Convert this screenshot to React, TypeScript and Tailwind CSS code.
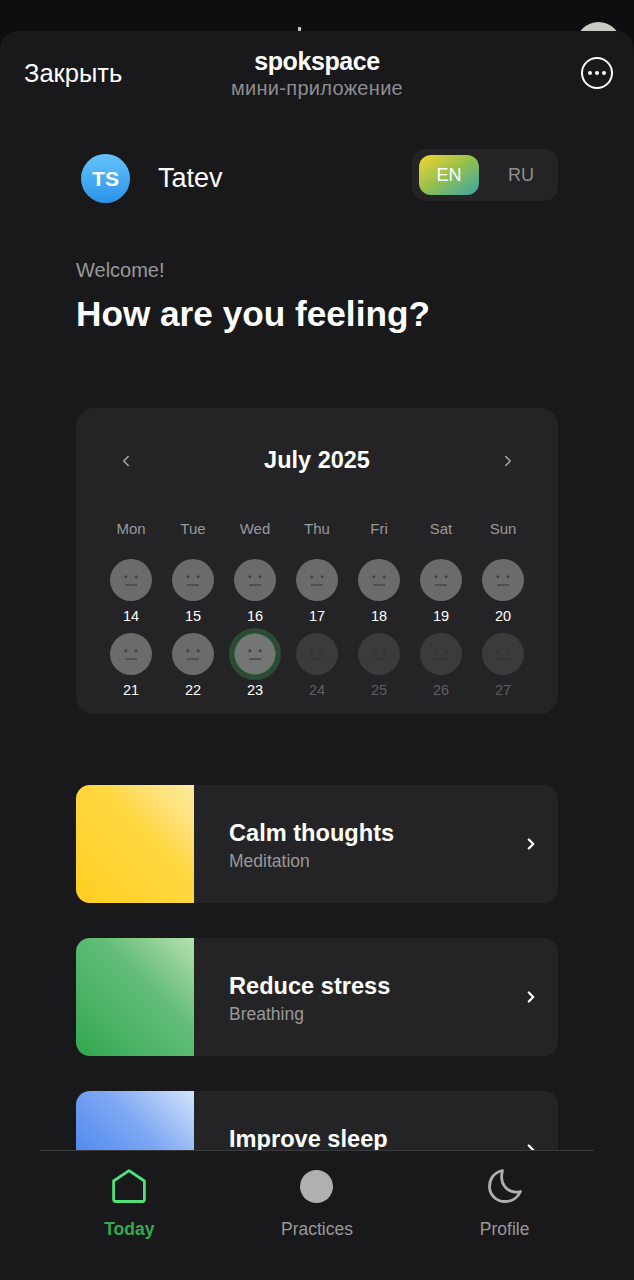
import { ChevronLeft, ChevronRight } from "lucide-react";

const week1 = [14, 15, 16, 17, 18, 19, 20];
const week2 = [21, 22, 23, 24, 25, 26, 27];
const dayNames = ["Mon", "Tue", "Wed", "Thu", "Fri", "Sat", "Sun"];

function Face({ day, muted, today }: { day: number; muted?: boolean; today?: boolean }) {
  const ink = muted ? "#323234" : "#434344";
  return (
    <div className="flex flex-col items-center">
      <div
        className={
          "w-[42px] h-[42px] rounded-full flex items-center justify-center " +
          (today
            ? "bg-[#747675] border border-[#3f7a4e] outline-[5px] outline-[#2c4a34]"
            : muted
              ? "bg-[#3b3b3d]"
              : "bg-[#6b6b6c]")
        }
      >
        <svg width="20" height="14" viewBox="0 0 20 14" fill="none">
          <circle cx="4.8" cy="3.7" r="1.5" fill={ink} />
          <circle cx="15.2" cy="3.7" r="1.5" fill={ink} />
          <line x1="4" y1="12" x2="16" y2="12" stroke={ink} strokeWidth="1.3" />
        </svg>
      </div>
      <span className={"mt-[5px] text-[14.5px] leading-[20px] " + (muted ? "text-[#5f5f61]" : "text-white")}>{day}</span>
    </div>
  );
}

function PracticeCard({ title, sub, swatch }: { title: string; sub: string; swatch: string }) {
  return (
    <div className="flex h-[118px] shrink-0 rounded-[14px] overflow-hidden bg-[#242426]">
      <div className={"w-[118px] shrink-0 " + swatch} />
      <div className="flex-1 flex flex-col justify-center pl-[35px] pt-[2px]">
        <span className="text-[23.6px] leading-[30px] font-bold text-white">{title}</span>
        <span className="text-[17.5px] leading-[24px] text-[#98989b] mt-[1px]">{sub}</span>
      </div>
      <div className="flex items-center pr-[18px]">
        <ChevronRight className="w-[18px] h-[18px] text-white" strokeWidth={3} />
      </div>
    </div>
  );
}

export default function App() {
  return (
    <div className="relative w-[634px] h-[1280px] overflow-hidden bg-[#0e0e10] flex flex-col font-['Liberation_Sans',Arial,sans-serif]">
      {/* bit of the app behind the sheet */}
      <div className="relative h-[31px] shrink-0">
        <div className="absolute left-[298px] top-[27px] w-[3px] h-[4px] bg-[#c4c4c4]" />
        <div className="absolute left-[576px] top-[22px] w-[45px] h-[45px] rounded-full bg-[#c9c9c6]" />
      </div>

      <div className="relative flex-1 min-h-0 flex flex-col bg-[#19191b] rounded-t-[18px]">
        <header className="h-[84px] shrink-0 flex items-center justify-between pl-[24px] pr-[21px]">
          <span className="text-[25.5px] text-white w-[120px]">Закрыть</span>
          <div className="flex flex-col items-center -mt-[1px]">
            <span className="text-[25px] leading-[30px] font-bold text-white tracking-[-0.4px]">spokspace</span>
            <span className="text-[20px] leading-[24px] text-[#8d8d90] tracking-[0.3px]">мини-приложение</span>
          </div>
          <div className="w-[123px] flex justify-end">
            <div className="w-[32px] h-[32px] rounded-full border-2 border-white flex items-center justify-center gap-[3px]">
              <span className="w-[4px] h-[4px] rounded-full bg-white" />
              <span className="w-[4px] h-[4px] rounded-full bg-white" />
              <span className="w-[4px] h-[4px] rounded-full bg-white" />
            </div>
          </div>
        </header>

        <main className="flex-1 min-h-0 overflow-hidden px-[76px]">
          <div className="flex items-start justify-between pt-[34px]">
            <div className="flex items-center gap-[28px] pl-[5px] mt-[5px]">
              <div className="w-[49px] h-[49px] rounded-full bg-gradient-to-b from-[#63c4fb] to-[#2a93e8] flex items-center justify-center text-white text-[21px] font-bold">
                TS
              </div>
              <span className="text-[27px] text-white">Tatev</span>
            </div>
            <div className="flex w-[146px] h-[52px] py-[6px] pl-[7px] pr-[6px] rounded-[14px] bg-[#242426]">
              <div className="w-[60px] rounded-[12px] bg-gradient-to-br from-[#f5d327] via-[#8fc04c] to-[#2fa2a0] flex items-center justify-center text-white text-[18px]">
                EN
              </div>
              <div className="flex-1 flex items-center justify-center pl-[11px] text-[18px] text-[#8e8e91]">RU</div>
            </div>
          </div>

          <p className="mt-[55px] text-[20px] leading-[24px] text-[#98989b]">Welcome!</p>
          <h1 className="mt-[10px] text-[35.2px] leading-[44px] font-bold text-white">How are you feeling?</h1>

          <section className="mt-[72px] h-[306px] rounded-[18px] bg-[#242426] px-[24px]">
            <div className="flex items-center justify-between h-[112px] px-[17px] pb-[6px]">
              <ChevronLeft className="w-[18px] h-[18px] text-[#a9a9ac]" strokeWidth={2} />
              <span className="text-[23.5px] font-bold text-white">July 2025</span>
              <ChevronRight className="w-[18px] h-[18px] text-[#a9a9ac]" strokeWidth={2} />
            </div>
            <div className="grid grid-cols-7 -mt-[1px]">
              {dayNames.map((d) => (
                <span key={d} className="text-center text-[15px] leading-[20px] text-[#98989b]">
                  {d}
                </span>
              ))}
            </div>
            <div className="grid grid-cols-7 mt-[20px]">
              {week1.map((d) => (
                <Face key={d} day={d} />
              ))}
            </div>
            <div className="grid grid-cols-7 mt-[7px]">
              {week2.map((d) => (
                <Face key={d} day={d} muted={d > 23} today={d === 23} />
              ))}
            </div>
          </section>

          <div className="mt-[71px] flex flex-col gap-[35px]">
            <PracticeCard title="Calm thoughts" sub="Meditation" swatch="bg-gradient-to-tr from-[#ffce1f] via-[#ffd840] via-60% to-[#ffeaa0]" />
            <PracticeCard title="Reduce stress" sub="Breathing" swatch="bg-gradient-to-tr from-[#2fa84f] via-[#62bd78] via-60% to-[#b5e0ae]" />
            <PracticeCard title="Improve sleep" sub="Sleep" swatch="bg-gradient-to-tr from-[#3675ee] via-[#7ba6f2] via-60% to-[#d3e2fb]" />
          </div>
        </main>

        <nav className="h-[130px] shrink-0 mx-[40px] border-t border-[#3a3a3c] grid grid-cols-3 bg-[#19191b]">
          <div className="flex flex-col items-center pt-[18px] -ml-[6px]">
            <svg width="34" height="34" viewBox="0 0 34 34" fill="none" stroke="#4fe07a" strokeWidth="2.8" strokeLinejoin="round">
              <path d="M17 1.6 L32.4 12 V30.5 a2 2 0 0 1 -2 2 H3.6 a2 2 0 0 1 -2 -2 V12 Z" />
            </svg>
            <span className="mt-[14px] text-[17.5px] leading-[24px] font-bold text-[#34a853]">Today</span>
          </div>
          <div className="flex flex-col items-center pt-[19px]">
            <div className="w-[33px] h-[33px] rounded-full bg-[#b0b0b2]" />
            <span className="mt-[14px] text-[17.5px] leading-[24px] text-[#98989b]">Practices</span>
          </div>
          <div className="flex flex-col items-center pt-[18px] ml-[6px]">
            <svg width="34" height="34" viewBox="0 0 34 34" fill="none" stroke="#b0b0b2" strokeWidth="2.8" strokeLinejoin="round">
              <path d="M14.5 1.5 C6 3.5 1.5 10 1.5 17.5 C1.5 26 8.5 32.5 17 32.5 C24 32.5 30 28.5 32.5 22.5 C22 25.5 10.5 17 14.5 1.5 Z" />
            </svg>
            <span className="mt-[14px] text-[17.5px] leading-[24px] text-[#98989b]">Profile</span>
          </div>
        </nav>
      </div>
    </div>
  );
}
